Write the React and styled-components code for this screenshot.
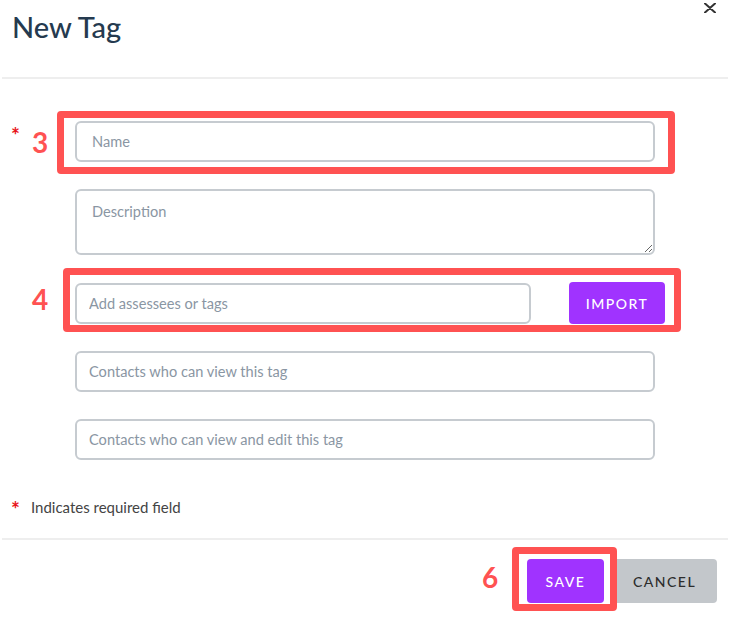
import React from 'react'
import styled, { createGlobalStyle } from 'styled-components'

const GlobalStyle = createGlobalStyle`
    * {
        box-sizing: border-box;
    }

    body {
        margin: 0;
        background: #ffffff;
        font-family: Lato, "Open Sans", sans-serif;
    }
`

function App() {
    return (
        <>
            <GlobalStyle />
            <Modal>
                <Header>
                    <Title>New Tag</Title>
                    <CloseButton aria-label="Close">
                        <svg width="12" height="10" viewBox="0 0 12 10">
                            <path d="M1 0.5 L11 9.5 M11 0.5 L1 9.5" stroke="#333" strokeWidth="2" strokeLinecap="round" />
                        </svg>
                    </CloseButton>
                </Header>
                <Divider />

                <Body>
                    <Row>
                        <Marker>
                            <Required>*</Required>
                        </Marker>
                        <Annotated>
                            <Input placeholder="Name" $pad={15} />
                            <Callout $t={-10} $l={-18} $r={-20} $b={-12} />
                            <Step $l={-43} $t={7}>3</Step>
                        </Annotated>
                    </Row>

                    <Row>
                        <Marker />
                        <TextArea placeholder="Description" />
                    </Row>

                    <Row>
                        <Marker />
                        <Annotated>
                            <InlineGroup>
                                <Input placeholder="Add assessees or tags" $width={456} />
                                <ImportButton>IMPORT</ImportButton>
                            </InlineGroup>
                            <Callout $t={-14} $l={-12} $r={-16} $b={-8} />
                            <Step $l={-43} $t={3}>4</Step>
                        </Annotated>
                    </Row>

                    <Row>
                        <Marker />
                        <Input placeholder="Contacts who can view this tag" />
                    </Row>

                    <Row>
                        <Marker />
                        <Input placeholder="Contacts who can view and edit this tag" />
                    </Row>

                    <Note>
                        <Required>*</Required>
                        <NoteText>Indicates required field</NoteText>
                    </Note>
                </Body>

                <Divider />

                <Footer>
                    <Annotated>
                        <SaveButton>SAVE</SaveButton>
                        <Callout $t={-12} $l={-15} $r={-13} $b={-8} />
                        <Step $l={-45} $t={4}>6</Step>
                    </Annotated>
                    <CancelButton>CANCEL</CancelButton>
                </Footer>
            </Modal>
        </>
    )
}

export default App

const Modal = styled.div`
    width: 730px;
    height: 623px;
    background: #ffffff;
    display: flex;
    flex-direction: column;
`

const Header = styled.div`
    height: 77px;
    padding: 10px 14px 0 12px;
    display: flex;
    justify-content: space-between;
    align-items: flex-start;
`

const Title = styled.h1`
    margin: 0;
    font-size: 29px;
    line-height: 34px;
    font-weight: 500;
    color: #253a4f;
`

const CloseButton = styled.button`
    margin-top: -7px;
    padding: 0;
    border: none;
    background: none;
    width: 12px;
    height: 10px;
    display: flex;
    cursor: pointer;
`

const Divider = styled.div`
    height: 2px;
    margin: 0 2px;
    background: #eeeeee;
`

const Body = styled.div`
    padding-top: 42px;
    display: flex;
    flex-direction: column;
    gap: 27px;
`

const Row = styled.div`
    display: flex;
    align-items: flex-start;
`

const Marker = styled.div`
    width: 75px;
    flex: none;
    padding: 4px 0 0 11px;
`

const Required = styled.span`
    color: #e8141b;
    font-size: 21px;
    line-height: 20px;
    font-weight: 700;
`

const Annotated = styled.div`
    position: relative;
    display: flex;
`

const Input = styled.input`
    width: ${p => p.$width || 580}px;
    height: 41px;
    padding: 0 12px 0 ${p => p.$pad || 12}px;
    border: 2px solid #c6cbd0;
    border-radius: 6px;
    font-family: Lato, sans-serif;
    font-size: 14.6px;
    color: #333;
    outline: none;

    &::placeholder {
        color: #8a96a3;
    }
`

const TextArea = styled.textarea`
    width: 580px;
    height: 66px;
    padding: 12px 15px;
    border: 2px solid #c6cbd0;
    border-radius: 6px;
    font-family: Lato, sans-serif;
    font-size: 14.6px;
    line-height: 18px;
    resize: vertical;
    outline: none;

    &::placeholder {
        color: #8a96a3;
    }
`

const InlineGroup = styled.div`
    display: flex;
    align-items: center;
    gap: 38px;
`

const BaseButton = styled.button`
    height: 44px;
    border: none;
    border-radius: 4px;
    font-family: Lato, sans-serif;
    font-size: 14px;
    font-weight: 500;
    letter-spacing: 1.5px;
    cursor: pointer;
`

const ImportButton = styled(BaseButton)`
    width: 96px;
    height: 42px;
    background: #a033ff;
    color: #ffffff;
`

const Callout = styled.span`
    position: absolute;
    top: ${p => p.$t}px;
    left: ${p => p.$l}px;
    right: ${p => p.$r}px;
    bottom: ${p => p.$b}px;
    border: 7px solid #ff5252;
    border-radius: 4px;
    pointer-events: none;
`

const Step = styled.span`
    position: absolute;
    top: ${p => p.$t}px;
    left: ${p => p.$l}px;
    font-size: 28px;
    line-height: 28px;
    font-weight: 700;
    color: #ff5252;
`

const Note = styled.div`
    height: 51px;
    padding: 12px 0 0 11px;
    display: flex;
    align-items: flex-start;
    gap: 11px;
`

const NoteText = styled.span`
    font-size: 15px;
    line-height: 20px;
    color: #444444;
    margin-top: -2px;
`

const Footer = styled.div`
    padding: 19px 13px 0 0;
    display: flex;
    justify-content: flex-end;
    gap: 8px;
`

const SaveButton = styled(BaseButton)`
    width: 77px;
    background: #a033ff;
    color: #ffffff;
`

const CancelButton = styled(BaseButton)`
    width: 105px;
    background: #c3c7cb;
    color: #2d2d2d;
`
